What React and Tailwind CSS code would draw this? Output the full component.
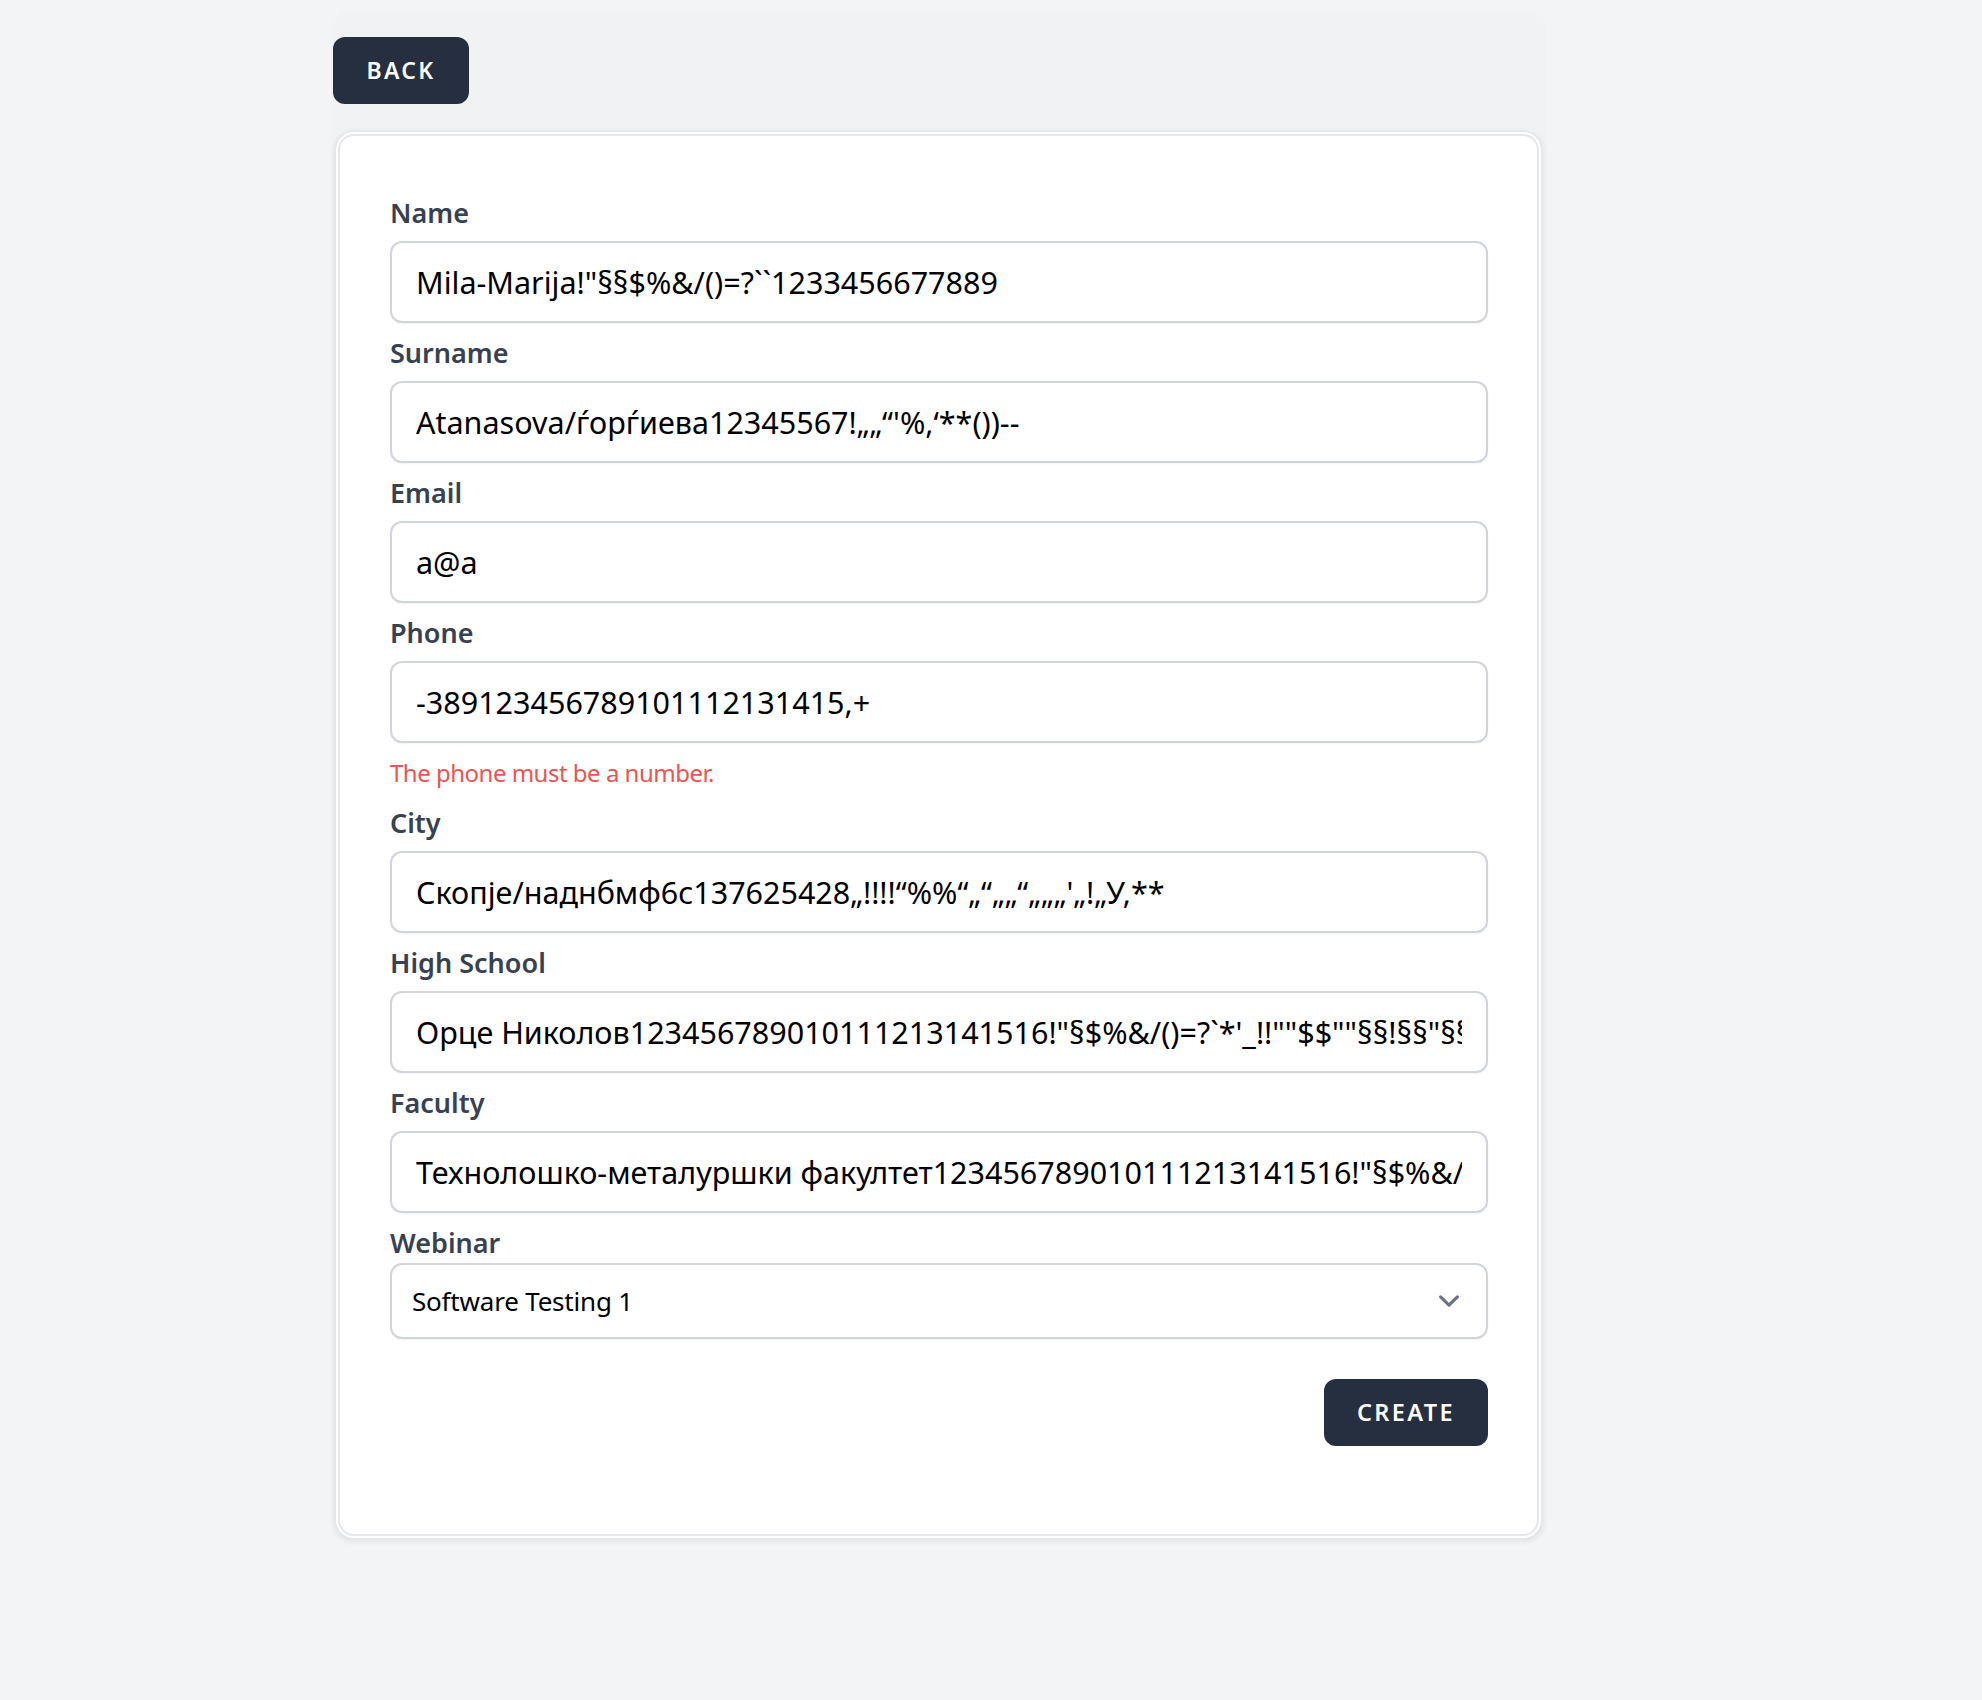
import React from "react";

const fields = [
  { label: "Name", value: 'Mila-Marija!"§§$%&/()=?``1233456677889' },
  { label: "Surname", value: "Atanasova/ѓорѓиева12345567!„„“'%,‘**())--" },
  { label: "Email", value: "a@a" },
  { label: "Phone", value: "-389123456789101112131415,+", error: "The phone must be a number." },
  { label: "City", value: "Скопје/наднбмф6с137625428„!!!!“%%“„“„„“„„„'„!„У,**" },
  { label: "High School", value: 'Орце Николов1234567890101112131415l6!"§$%&/()=?`*\'_!!""$$""§§!§§"§§!"§$%&'.replace("l6", "16") },
  { label: "Faculty", value: 'Технолошко-металуршки факултет123456789010111213141516!"§$%&/()=?`*\'_!!' },
];

export default function App() {
  const font = { fontFamily: '"Noto Sans", "Open Sans", sans-serif' };
  return (
    <div className="min-h-[1700px] bg-[#f3f4f6] pt-[13px]" style={font}>
      <div className="ml-[333px] w-[1212px] rounded-[16px] bg-[#f1f2f4] pt-[24px] shadow-[0_0_3px_rgba(0,0,0,0.03)]">
        <button className="flex h-[67px] w-[136px] items-center justify-center rounded-[12px] bg-[#252f3f] text-[23px] font-semibold uppercase tracking-[0.1em] text-white">
          Back
        </button>
        <div className="ml-[1px] mt-[26px] w-[1209px] rounded-[20px] border-[6px] border-double border-[#e5e7eb] bg-white pb-[88px] pl-[50px] pr-[49px] pt-[57px] shadow-[0_2px_6px_rgba(0,0,0,0.06)]">
          <div className="flex flex-col gap-[10px]">
            {fields.map((f) => (
              <div key={f.label} className="flex flex-col">
                <label className="block text-[27px] font-semibold leading-[40px] text-[#374151]">{f.label}</label>
                <input
                  readOnly
                  value={f.value}
                  className="mt-[8px] block h-[82px] w-full rounded-[12px] border-2 border-[#d1d5db] bg-white px-[24px] text-[30.5px] leading-[48px] text-black shadow-[0_1px_2px_rgba(0,0,0,0.05)] outline-none"
                />
                {f.error && (
                  <p className="mt-[10px] text-[24px] leading-[40px] tracking-[-0.5px] text-[#f05252]">{f.error}</p>
                )}
              </div>
            ))}
            <div className="flex flex-col">
              <label className="block text-[27px] font-semibold leading-[40px] text-[#374151]">Webinar</label>
              <div className="relative flex h-[76px] w-full items-center rounded-[12px] border-2 border-[#d1d5db] bg-white pl-[20px] text-[26px] tracking-[-0.2px] text-black shadow-[0_1px_2px_rgba(0,0,0,0.05)]">
                Software Testing 1
                <svg className="absolute right-[16px] top-1/2 h-[42px] w-[42px] -translate-y-1/2" viewBox="0 0 20 20" fill="none">
                  <path d="M6 8l4 4 4-4" stroke="#6b7280" strokeWidth="1.5" strokeLinecap="round" strokeLinejoin="round" />
                </svg>
              </div>
            </div>
          </div>
          <div className="mt-[40px] flex justify-end">
            <button className="flex h-[67px] w-[164px] items-center justify-center rounded-[12px] bg-[#252f3f] text-[23.5px] font-semibold uppercase tracking-[0.1em] text-white">
              Create
            </button>
          </div>
        </div>
      </div>
    </div>
  );
}
